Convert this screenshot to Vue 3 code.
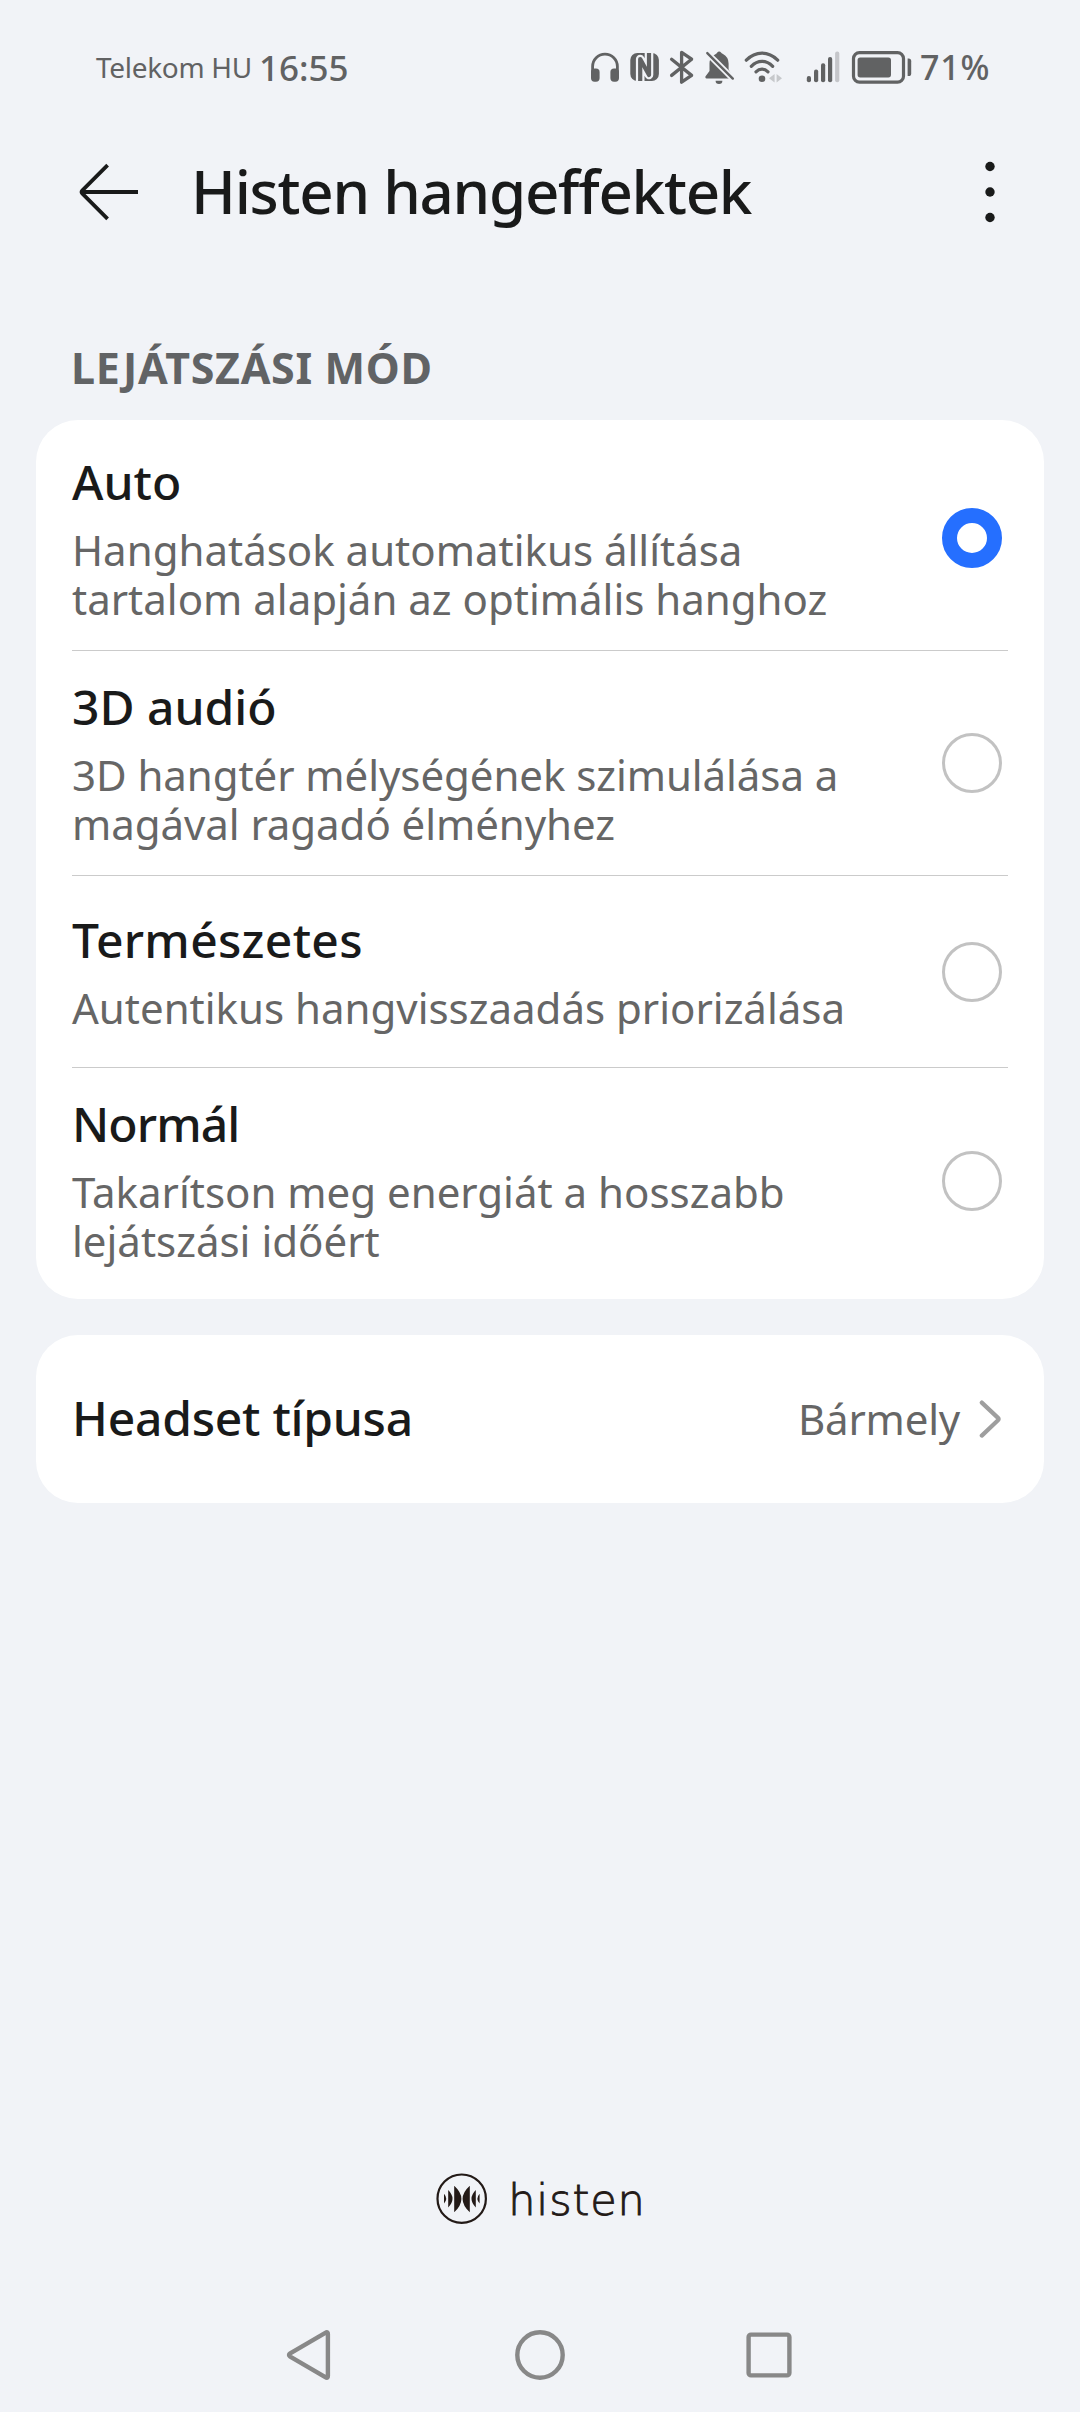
<script setup>
import { ref } from 'vue'

const modes = [
  { id: 'auto', name: 'Auto', desc: 'Hanghatások automatikus állítása\ntartalom alapján az optimális hanghoz' },
  { id: 'spatial', name: '3D audió', desc: '3D hangtér mélységének szimulálása a\nmagával ragadó élményhez' },
  { id: 'natural', name: 'Természetes', desc: 'Autentikus hangvisszaadás priorizálása' },
  { id: 'normal', name: 'Normál', desc: 'Takarítson meg energiát a hosszabb\nlejátszási időért' },
]
const selected = ref('auto')
</script>

<template>
  <div class="screen">
    <header class="status">
      <span class="carrier">Telekom HU</span>
      <span class="time">16:55</span>
      <div class="icons">
        <svg class="i-head" width="30" height="36" viewBox="590 49 30 36">
          <path d="M592.6 73V66.5a12.4 12.4 0 0 1 24.8 0V73" fill="none" stroke="#616263" stroke-width="2.8" />
          <rect x="591" y="68.5" width="8.6" height="13.2" rx="3.6" />
          <rect x="610.4" y="68.5" width="8.6" height="13.2" rx="3.6" />
        </svg>
        <svg class="i-nfc" width="30" height="36" viewBox="630 49 30 36">
          <rect x="630.3" y="53" width="28.6" height="28" rx="7" />
          <path d="M640.2 82V59L649 75V52" fill="none" stroke="#f1f3f7" stroke-width="8.6" stroke-linejoin="round" />
          <path d="M640.2 81V59L649 75V53" fill="none" stroke="#616263" stroke-width="4.2" stroke-linejoin="round" />
        </svg>
        <svg class="i-bt" width="26" height="36" viewBox="669 49 26 36">
          <path d="M671.6 59.2L691.6 75.4L681.6 82.2V52.4L691.6 59.2L671.6 75.4" fill="none" stroke="#616263" stroke-width="3.3" stroke-linejoin="round" stroke-linecap="round" />
        </svg>
        <svg class="i-bell" width="32" height="36" viewBox="704 49 32 36">
          <path d="M715.8 53.9Q717 52.9 717.3 52.4A2.2 2.2 0 0 1 721 52.4Q721.4 53.2 723 54Q728.6 57 728.6 63.5V69.5L732 75.5Q732.6 78.6 730 78.6H706.5Q705 78.6 705.4 76.6L709.5 71V63.5Q709.5 57 715.8 53.9Z" />
          <path d="M715.6 80.8H722.4A3.4 3.2 0 0 1 715.6 80.8Z" />
          <path d="M706 51.8L735 80.8" stroke="#f1f3f7" stroke-width="6" />
          <path d="M707.3 53.1L732.8 78.6" stroke="#616263" stroke-width="2.4" stroke-linecap="round" />
        </svg>
        <svg class="i-wifi" width="40" height="36" viewBox="743 49 40 36">
          <g fill="none" stroke="#616263" stroke-width="3.2" stroke-linecap="round">
            <path d="M746.3 60.2Q753.2 53.1 762 53.1T777.7 60.2" />
            <path d="M751.3 66.3Q756 61.3 762 61.3T772.7 66.3" />
            <path d="M756 71.8Q758.6 69.2 762 69.2T768 71.8" />
          </g>
          <circle cx="762" cy="78.7" r="3.3" />
          <path d="M774.6 74V82.6L769 78.3ZM776.6 74V82.6L782 78.3Z" fill="#c6c8cb" />
        </svg>
        <svg class="i-sig" width="34" height="36" viewBox="806 49 34 36">
          <rect x="806.8" y="76" width="4.2" height="6.2" rx="2" />
          <rect x="814" y="69.6" width="4.2" height="12.6" rx="2" />
          <rect x="821" y="63.3" width="4.2" height="18.9" rx="2" />
          <rect x="828" y="57" width="4.2" height="25.2" rx="2" />
          <rect x="835.1" y="51.5" width="4.2" height="30.7" rx="2" fill="#c5c6ca" />
        </svg>
        <svg class="i-bat" width="61" height="36" viewBox="851 49 61 36">
          <rect x="853.5" y="52.6" width="50" height="29.6" rx="6" fill="none" stroke="#616263" stroke-width="3.2" />
          <rect x="857.6" y="57.4" width="33.4" height="20" rx="2.6" />
          <path d="M907.6 58.6h1q2.6 0 2.6 2.6v12.2q0 2.6-2.6 2.6h-1z" />
        </svg>
      </div>
      <span class="pct">71%</span>
    </header>

    <div class="titlebar">
      <svg class="back" width="62" height="62" viewBox="78 161 62 62">
        <path d="M107.6 165.2L82.4 190.3Q80.8 192 82.4 193.7L107.6 218.8M82 192H138" fill="none" stroke="#191a1a" stroke-width="3.8" stroke-linejoin="round" />
      </svg>
      <h1>Histen hangeffektek</h1>
      <svg class="more" width="12" height="62" viewBox="984 161 12 62" fill="#191a1a">
        <circle cx="990" cy="166.5" r="4.7" />
        <circle cx="990" cy="192" r="4.7" />
        <circle cx="990" cy="217.5" r="4.7" />
      </svg>
    </div>

    <h2>LEJÁTSZÁSI MÓD</h2>

    <section class="card modes">
      <div v-for="m in modes" :key="m.id" class="mode" :class="m.id" @click="selected = m.id">
        <div class="text">
          <div class="name">{{ m.name }}</div>
          <div class="desc">{{ m.desc }}</div>
        </div>
        <span class="radio" :class="{ on: selected === m.id }"></span>
      </div>
    </section>

    <section class="card headset">
      <span class="name">Headset típusa</span>
      <span class="value">Bármely</span>
      <svg width="22" height="40" viewBox="979 1398 22 40">
        <path d="M981.8 1401.6L998 1416.9Q999.3 1418.1 998 1419.3L981.8 1434.6" fill="none" stroke="#9e9e9e" stroke-width="4.2" stroke-linecap="round" />
      </svg>
    </section>

    <footer class="brand">
      <svg width="52" height="52" viewBox="436 2173 52 52" fill="#231a17">
        <circle cx="461.7" cy="2198.7" r="24.2" fill="none" stroke="#231a17" stroke-width="2.2" />
        <path d="M444 2193.8q4.4 4.9 0 9.8zM448.2 2190q8.6 8.7 0 17.4zM454.2 2185.7q14.4 13 0 26.6zM469.8 2185.7q-14.4 13 0 26.6zM475.8 2190q-8.6 8.7 0 17.4zM479.6 2193.8q-4.4 4.9 0 9.8z" />
      </svg>
      <span>histen</span>
    </footer>

    <nav class="nav">
      <svg width="52" height="54" viewBox="284 2328 52 54">
        <path d="M326.2 2332.3L290.2 2353.4Q287.8 2355 290.2 2356.6L326.2 2377.7Q327.9 2378 327.9 2376V2334Q327.9 2332 326.2 2332.3Z" />
      </svg>
      <svg width="54" height="54" viewBox="513 2328 54 54"><circle cx="540" cy="2355" r="22.7" /></svg>
      <svg width="50" height="54" viewBox="744 2328 50 54"><rect x="748.6" y="2334.6" width="40.8" height="40.8" rx="2.4" /></svg>
    </nav>
  </div>
</template>

<style>
body { margin: 0; background: #f1f3f7; }
</style>

<style scoped>
.screen {
  width: 1080px;
  height: 2412px;
  display: flex;
  flex-direction: column;
  background: #f1f3f7;
  font-family: "Noto Sans", "Open Sans", sans-serif;
  color: #191a1a;
  overflow: hidden;
}
.screen svg { display: block; flex: none; }
.status {
  height: 134px;
  flex: none;
  display: flex;
  align-items: center;
  padding-left: 96px;
  color: #616263;
  white-space: nowrap;
}
.carrier { width: 163px; font-size: 28px; letter-spacing: -0.3px; }
.time { width: 331px; font-size: 35px; font-weight: 500; }
.icons { display: flex; fill: #616263; }
.i-nfc { margin-left: 10px; }
.i-bt { margin-left: 9px; }
.i-bell { margin-left: 9px; }
.i-wifi { margin-left: 7px; }
.i-sig { margin-left: 23px; }
.i-bat { margin-left: 11px; }
.pct { margin: -1px 0 0 8px; font-size: 34px; font-weight: 500; letter-spacing: 0.8px; }
.titlebar {
  height: 116px;
  flex: none;
  display: flex;
  align-items: center;
  padding: 0 84px 0 78px;
}
h1 {
  flex: 1;
  margin: -3px 0 0 51px;
  font-size: 60px;
  line-height: 80px;
  font-weight: 500;
  letter-spacing: -1.25px;
}
h2 {
  margin: 93px 0 27px 71px;
  font-size: 43px;
  line-height: 50px;
  font-weight: 700;
  letter-spacing: 0.65px;
  color: #616365;
}
.card {
  flex: none;
  margin: 0 36px;
  padding: 0 36px;
  background: #fff;
  border-radius: 42px;
}
.modes { padding-top: 6px; padding-bottom: 6px; }
.mode {
  height: 224px;
  display: flex;
  align-items: center;
  justify-content: space-between;
  border-bottom: 1px solid #cbcbcb;
}
.name { font-size: 48px; line-height: 56px; font-weight: 500; }
.mode.natural { height: 191px; }
.natural .name { letter-spacing: 0.3px; }
.mode.normal { height: 225px; border-bottom: 0; }
.normal .name { letter-spacing: -0.9px; }
.desc {
  margin-top: 15px;
  font-size: 42px;
  line-height: 49px;
  color: #666;
  white-space: pre;
}
.spatial .desc { letter-spacing: -0.06px; }
.radio {
  box-sizing: border-box;
  width: 60px;
  height: 60px;
  margin-right: 6px;
  border: 3px solid #c2c2c2;
  border-radius: 50%;
}
.radio.on { border: 15px solid #256fff; }
.headset {
  height: 168px;
  margin-top: 36px;
  padding-right: 43px;
  display: flex;
  align-items: center;
}
.headset .name { flex: 1; margin-top: -3px; letter-spacing: -0.25px; }
.value { margin-right: 19px; margin-top: -1px; font-size: 42px; letter-spacing: -0.2px; color: #666; }
.brand {
  display: flex;
  align-items: center;
  justify-content: center;
  height: 52px;
  margin-top: auto;
  padding-left: 2px;
  color: #231a17;
}
.brand span {
  margin: 1px 0 0 20px;
  font-family: "DejaVu Sans ExtraLight", "DejaVu Sans Light", "DejaVu Sans", sans-serif;
  font-weight: 200;
  font-size: 43px;
  line-height: 52px;
  letter-spacing: 0.9px;
  -webkit-text-stroke: 0.9px #231a17;
}
.nav {
  display: flex;
  height: 54px;
  flex: none;
  justify-content: space-between;
  margin: 103px 286px 30px 284px;
  fill: none;
  stroke: #888;
  stroke-width: 4.4;
}
</style>
